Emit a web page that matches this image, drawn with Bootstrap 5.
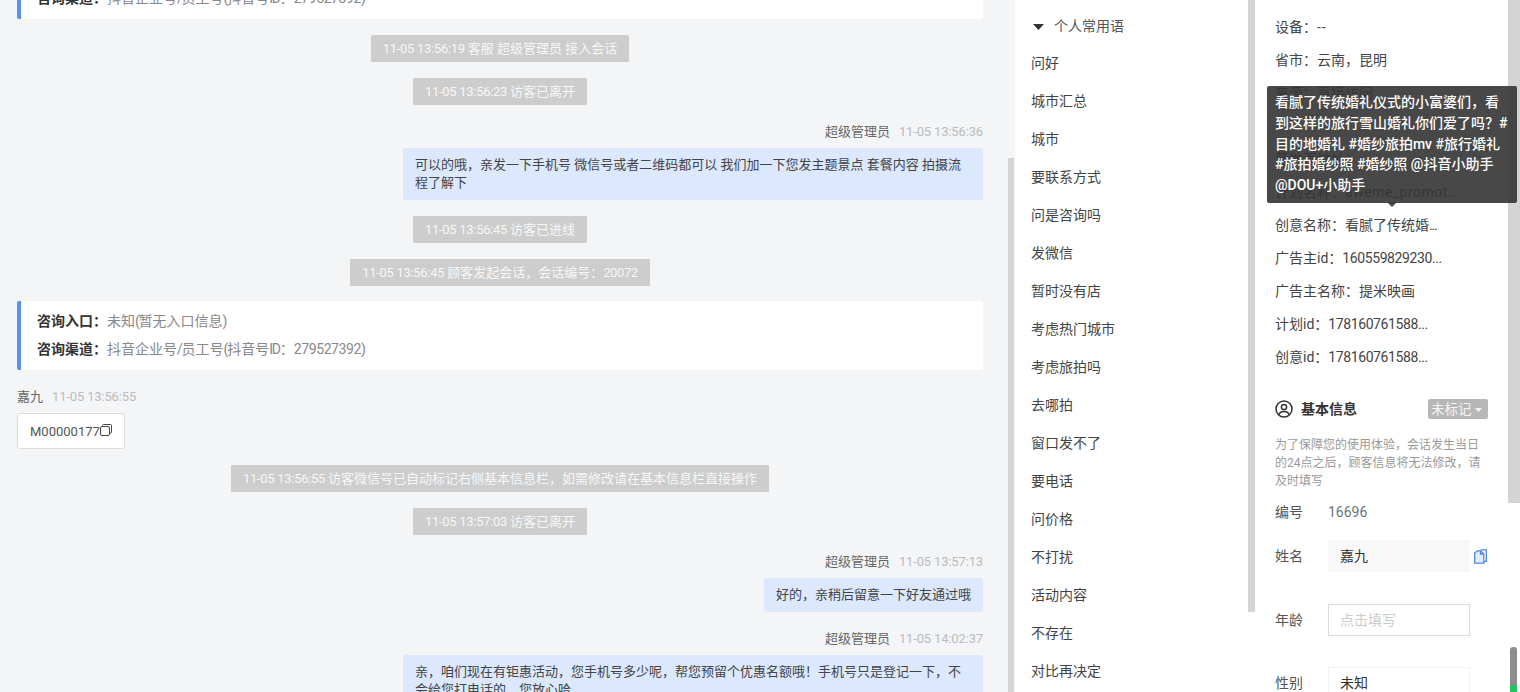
<!DOCTYPE html>
<html lang="zh-CN">
<head>
<meta charset="utf-8">
<title>会话</title>
<link rel="stylesheet" href="https://cdn.jsdelivr.net/npm/bootstrap@5.3.0/dist/css/bootstrap.min.css">
<style>
html,body{height:692px;overflow:hidden;background:#fff}
body{font-family:Roboto,"Noto Sans CJK SC",sans-serif;font-size:14px;color:#333}
.shell{height:692px;width:1520px}
.chat-pane{width:1015px;flex:none;background:#f4f5f7;overflow:hidden}
.chat-flow{margin-top:-50px;padding:0 32px 0 17px;gap:16px}
.stamp{letter-spacing:-.3px}
.digits{letter-spacing:-.4px}
.nar{letter-spacing:-1.2px}
.wide-dash{letter-spacing:1px}
.wide-latin{letter-spacing:.5px}
.sys-line{height:27px;line-height:27px;padding:0 12px;background:#cdcdcd;color:#f7f7f7;font-size:13px;border-radius:1px}
.entry-box{background:#fff;border-left:4px solid #5b90ee;padding:6px 16px 7px;color:#888;border-radius:2px;height:69px}
.entry-box .entry-row{height:28px;line-height:28px}
.entry-box b{color:#333;font-weight:700}
.entry-tight{margin-top:-1px}
.meta-line{height:22px;line-height:22px;font-size:13px;color:#666;margin-bottom:5px}
.meta-time{color:#bbb;margin-left:9px;letter-spacing:-.15px}
.bubble{background:#dbe8fd;color:#444;font-size:13px;line-height:18px;padding:8px 12px;border-radius:3px}
.bubble-wide{width:580px}
.code-chip{background:#fff;border:1px solid #dcdcdc;border-radius:3px;height:36px;width:108px;font-size:13px;color:#555;padding-left:12px;padding-top:1px}
.code-chip svg{margin-bottom:3px;flex:none}
.phrase-pane{width:240px;flex:none;overflow:hidden;background:#fff}
.phrase-head{height:22px;line-height:22px;margin:15px 0 7px 18px;color:#555}
.phrase-head svg{margin-right:10px}
.phrase-item{height:38px;line-height:38px;padding-left:16px;color:#444}
.info-pane{flex:1 1 auto;overflow:hidden;background:#fff;padding:0 0 0 20px}
.facts{padding-top:11px;color:#444}
.fact-row{height:33px;line-height:33px;white-space:nowrap}
.base-head{margin-top:24px;height:22px;width:213px}
.base-title{font-weight:700;color:#333;margin-left:8px}
.mark-tag{width:60px;height:20px;line-height:20px;background:#b7b7b7;color:#f4f4f4;border-radius:2px;padding-left:3px;font-size:13.5px}
.mark-tag svg{margin-left:3px;vertical-align:2px}
.base-note{font-size:12px;line-height:18px;color:#999;width:212px;margin-top:16px}
.field-row{width:216px;color:#555}
.field-label{width:53px;flex:none}
.field-box{width:142px;height:32px;line-height:30px;padding-left:11px;border:1px solid #ddd;flex:none;color:#333}
.field-filled{background:#f8f8f8;border-color:#f8f8f8}
.field-empty{color:#ccc}
.field-soft{border-color:#f3f3f3}
.row-a{margin-top:13px;height:18px;line-height:18px}
.row-b{margin-top:19px}
.row-c{margin-top:32px}
.row-d{margin-top:31px}
.tip-box{position:absolute;left:1267px;top:86px;width:250px;height:117px;background:rgba(52,52,52,.9);color:#fff;padding:6px 8px;line-height:20.8px;font-weight:500;border-radius:2px;z-index:5}
.tip-box::after{content:"";position:absolute;left:120px;bottom:-4px;border:5px solid transparent;border-top-color:rgba(52,52,52,.9);border-bottom:0}
.bar{position:absolute;background:#d4d4d4;z-index:4}
.bar-chat{left:1008px;top:158px;width:6px;height:534px}
.bar-phr{left:1248px;top:0;width:7px;height:612px}
.bar-info{left:1508px;top:0;width:12px;height:503px}
.bar-page{left:1510px;top:647px;width:7px;height:45px;background:linear-gradient(#8d8d8d 0 38px,#22c45e 38px);border-radius:3px 3px 0 0}
</style>
</head>
<body>
<div class="shell d-flex position-relative">
  <div class="chat-pane">
    <div class="chat-flow d-flex flex-column">
      <div class="entry-box">
        <div class="entry-row"><b>咨询入口&#xFF1A;</b>未知<span class="nar">(</span>暂无入口信息<span class="nar">)</span></div>
        <div class="entry-row"><b>咨询渠道&#xFF1A;</b>抖音企业号<span class="nar">/</span>员工号<span class="nar">(</span>抖音号<span class="nar">ID</span>&#xFF1A;<span class="digits">279527392)</span></div>
      </div>
      <div class="sys-line align-self-center"><span class="stamp">11-05 13:56:19 </span>客服 超级管理员 接入会话</div>
      <div class="sys-line align-self-center"><span class="stamp">11-05 13:56:23 </span>访客已离开</div>
      <div class="d-flex flex-column align-items-end">
        <div class="meta-line">超级管理员<span class="meta-time">11-05 13:56:36</span></div>
        <div class="bubble bubble-wide">可以的哦&#xFF0C;亲发一下手机号 微信号或者二维码都可以 我们加一下您发主题景点 套餐内容 拍摄流程了解下</div>
      </div>
      <div class="sys-line align-self-center"><span class="stamp">11-05 13:56:45 </span>访客已进线</div>
      <div class="sys-line align-self-center"><span class="stamp">11-05 13:56:45 </span>顾客发起会话&#xFF0C;会话编号&#xFF1A;<span class="digits">20072</span></div>
      <div class="entry-box entry-tight">
        <div class="entry-row"><b>咨询入口&#xFF1A;</b>未知<span class="nar">(</span>暂无入口信息<span class="nar">)</span></div>
        <div class="entry-row"><b>咨询渠道&#xFF1A;</b>抖音企业号<span class="nar">/</span>员工号<span class="nar">(</span>抖音号<span class="nar">ID</span>&#xFF1A;<span class="digits">279527392)</span></div>
      </div>
      <div class="d-flex flex-column align-items-start">
        <div class="meta-line">嘉九<span class="meta-time">11-05 13:56:55</span></div>
        <div class="code-chip d-flex align-items-center">M00000177<svg width="12" height="12" viewBox="0 0 12 12" fill="none" stroke="#444" stroke-width="1"><rect x="0.5" y="2.500" width="9" height="9" rx="1.500"/><path d="M2.500 2.500V1.500a1 1 0 0 1 1-1h7a1 1 0 0 1 1 1V8a1 1 0 0 1-1 1h-1"/></svg></div>
      </div>
      <div class="sys-line align-self-center"><span class="stamp">11-05 13:56:55 </span>访客微信号已自动标记右侧基本信息栏&#xFF0C;如需修改请在基本信息栏直接操作</div>
      <div class="sys-line align-self-center"><span class="stamp">11-05 13:57:03 </span>访客已离开</div>
      <div class="d-flex flex-column align-items-end">
        <div class="meta-line">超级管理员<span class="meta-time">11-05 13:57:13</span></div>
        <div class="bubble">好的&#xFF0C;亲稍后留意一下好友通过哦</div>
      </div>
      <div class="d-flex flex-column align-items-end">
        <div class="meta-line">超级管理员<span class="meta-time">11-05 14:02:37</span></div>
        <div class="bubble bubble-wide">亲&#xFF0C;咱们现在有钜惠活动&#xFF0C;您手机号多少呢&#xFF0C;帮您预留个优惠名额哦&#xFF01;手机号只是登记一下&#xFF0C;不会给您打电话的&#xFF0C;您放心哈</div>
      </div>
    </div>
  </div>

  <div class="phrase-pane">
    <div class="phrase-head"><svg width="11" height="6" viewBox="0 0 11 6"><path d="M0 0h11L5.500 6z" fill="#333"/></svg>个人常用语</div>
    <div class="phrase-item">问好</div>
    <div class="phrase-item">城市汇总</div>
    <div class="phrase-item">城市</div>
    <div class="phrase-item">要联系方式</div>
    <div class="phrase-item">问是咨询吗</div>
    <div class="phrase-item">发微信</div>
    <div class="phrase-item">暂时没有店</div>
    <div class="phrase-item">考虑热门城市</div>
    <div class="phrase-item">考虑旅拍吗</div>
    <div class="phrase-item">去哪拍</div>
    <div class="phrase-item">窗口发不了</div>
    <div class="phrase-item">要电话</div>
    <div class="phrase-item">问价格</div>
    <div class="phrase-item">不打扰</div>
    <div class="phrase-item">活动内容</div>
    <div class="phrase-item">不存在</div>
    <div class="phrase-item">对比再决定</div>
  </div>

  <div class="info-pane">
    <div class="facts">
      <div class="fact-row">设备&#xFF1A;<span class="wide-dash">--</span></div>
      <div class="fact-row">省市&#xFF1A;云南&#xFF0C;昆明</div>
      <div class="fact-row">来源&#xFF1A;直接访问</div>
      <div class="fact-row">&nbsp;</div>
      <div class="fact-row">落地页地址&#xFF1A;</div>
      <div class="fact-row">计划名称&#xFF1A;<span class="wide-latin">aweme_promot...</span></div>
      <div class="fact-row">创意名称&#xFF1A;看腻了传统婚<span class="nar">...</span></div>
      <div class="fact-row">广告主id&#xFF1A;<span class="digits">160559829230...</span></div>
      <div class="fact-row">广告主名称&#xFF1A;提米映画</div>
      <div class="fact-row">计划id&#xFF1A;<span class="digits">178160761588...</span></div>
      <div class="fact-row">创意id&#xFF1A;<span class="digits">178160761588...</span></div>
    </div>
    <div class="base-head d-flex align-items-center justify-content-between">
      <div class="d-flex align-items-center">
        <svg width="18" height="18" viewBox="0 0 18 18" fill="none" stroke="#333" stroke-width="1.500"><circle cx="9" cy="9" r="8"/><circle cx="9" cy="7" r="2.600"/><path d="M3.800 14.600c.8-2 2.800-3 5.200-3s4.400 1 5.200 3"/></svg>
        <span class="base-title">基本信息</span>
      </div>
      <div class="mark-tag">未标记<svg width="7" height="4" viewBox="0 0 7 4"><path d="M0 0h7L3.500 4z" fill="#f4f4f4"/></svg></div>
    </div>
    <div class="base-note">为了保障您的使用体验&#xFF0C;会话发生当日的24点之后&#xFF0C;顾客信息将无法修改&#xFF0C;请及时填写</div>
    <div class="field-row row-a d-flex"><span class="field-label">编号</span><span class="text-secondary">16696</span></div>
    <div class="field-row row-b d-flex align-items-center"><span class="field-label">姓名</span><div class="field-box field-filled">嘉九</div>
      <svg class="ms-1" width="13" height="15" viewBox="0 0 13 15" fill="none" stroke="#4f86e8" stroke-width="1.300"><path d="M6.500 .8h5.800v11.500H9.800"/><path d="M.7 4 3.500 1.800h3.200l3.100 3.200v9.200H.7z" fill="#e4edfc"/><path d="M6.500 1.800V5h3.300"/></svg>
    </div>
    <div class="field-row row-c d-flex align-items-center"><span class="field-label">年龄</span><div class="field-box field-empty">点击填写</div></div>
    <div class="field-row row-d d-flex align-items-center"><span class="field-label">性别</span><div class="field-box field-soft">未知</div></div>
  </div>

  <div class="bar bar-chat"></div>
  <div class="bar bar-phr"></div>
  <div class="bar bar-info"></div>
  <div class="bar bar-page"></div>
  <div class="tip-box">看腻了传统婚礼仪式的小富婆们&#xFF0C;看到这样的旅行雪山婚礼你们爱了吗&#xFF1F;#目的地婚礼 #婚纱旅拍mv #旅行婚礼 #旅拍婚纱照 #婚纱照 @抖音小助手 @DOU+小助手</div>
</div>
<script src="https://cdn.jsdelivr.net/npm/bootstrap@5.3.0/dist/js/bootstrap.bundle.min.js"></script>
</body>
</html>
